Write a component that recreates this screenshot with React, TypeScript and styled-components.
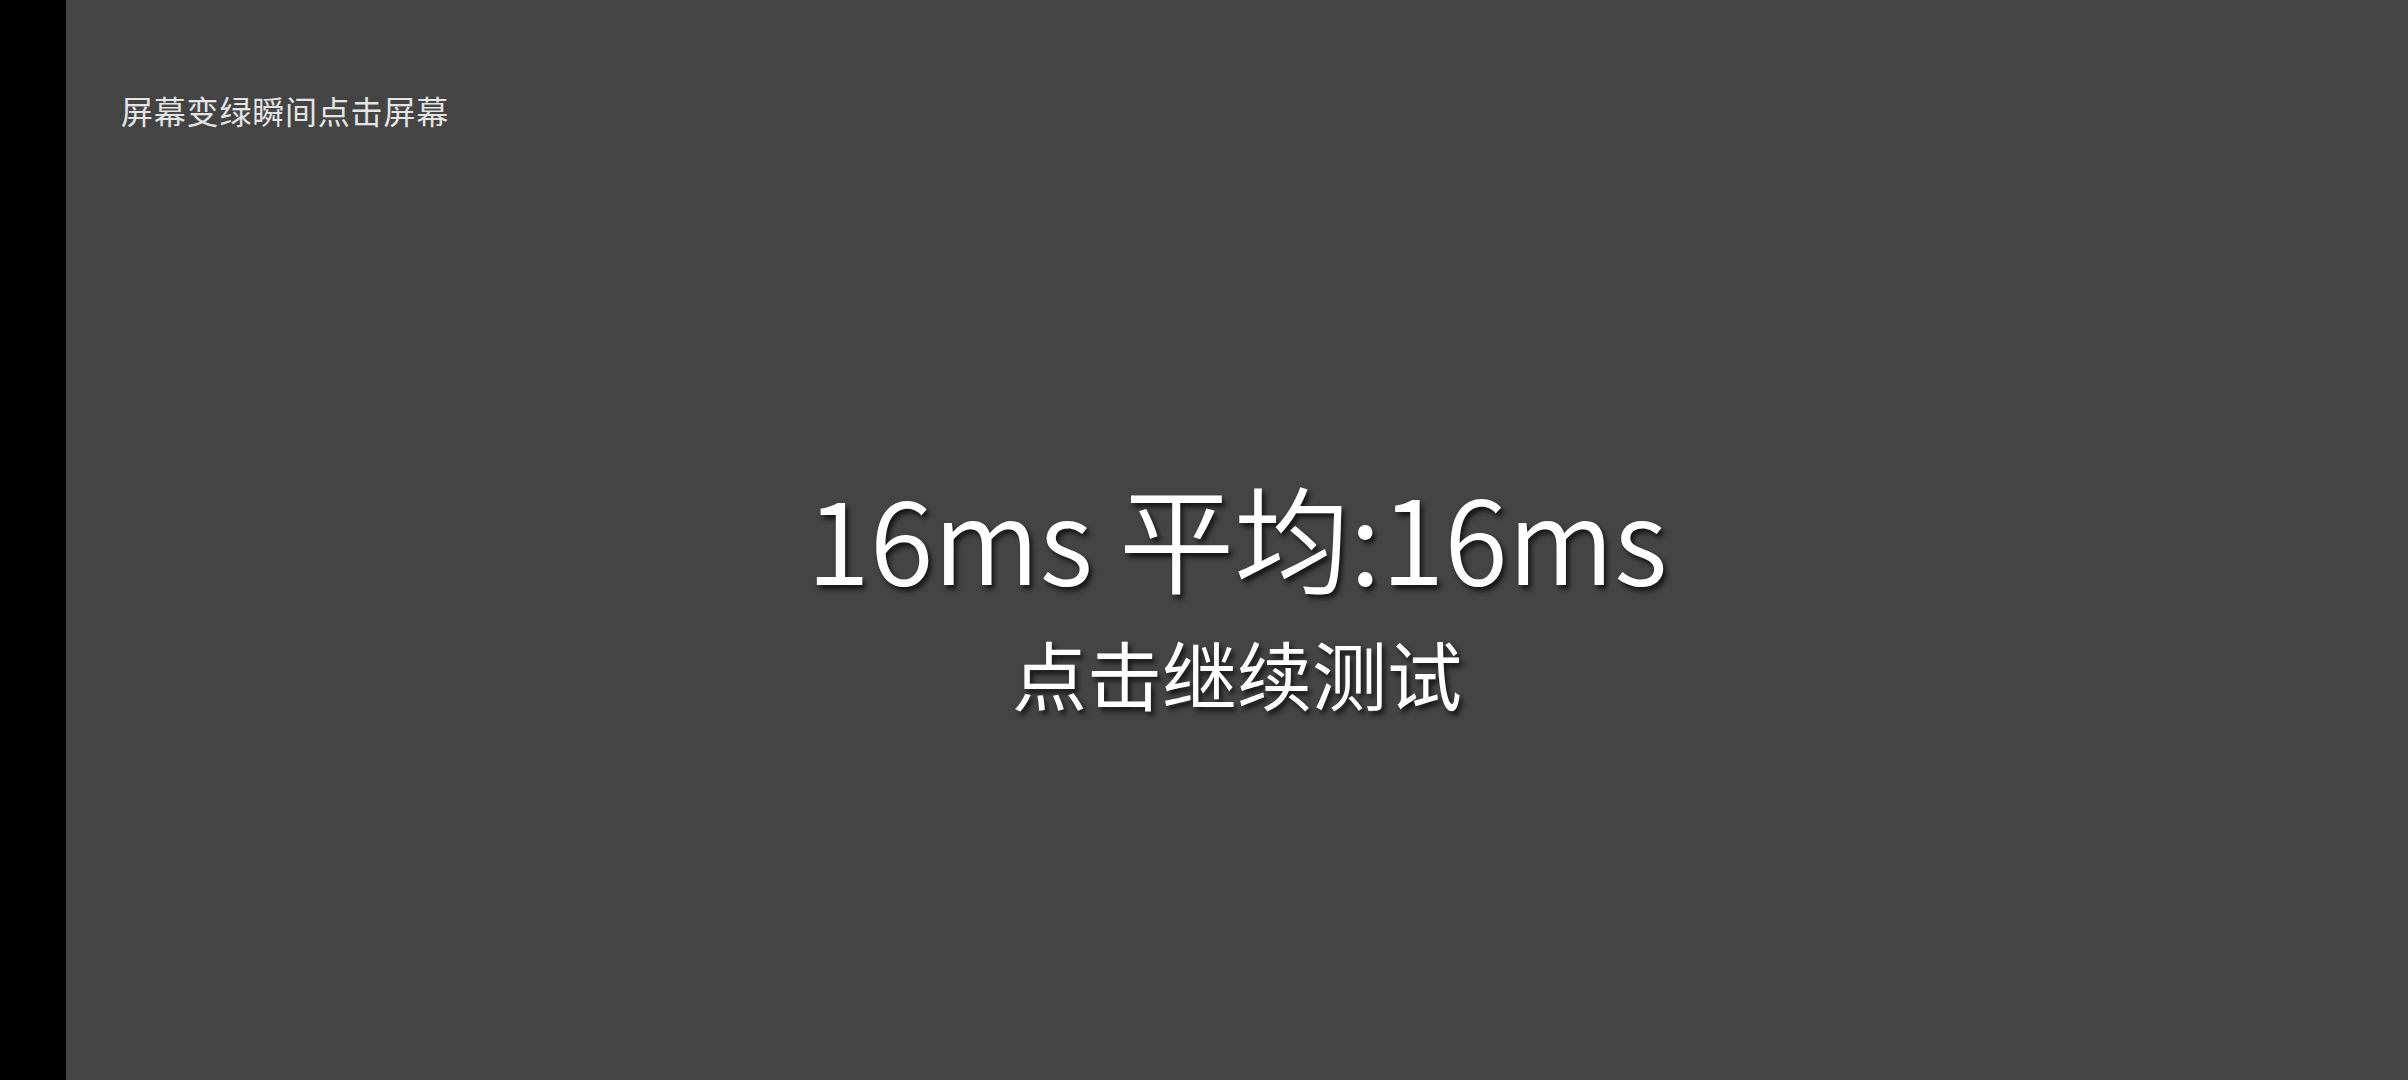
import React from "react";
import styled, { createGlobalStyle } from "styled-components";

const Global = createGlobalStyle`
  html, body { margin: 0; padding: 0; background: #000; }
  body { width: 2408px; height: 1080px; overflow: hidden; }
  #root { height: 100%; }
`;

const Screen = styled.div`
  display: flex;
  width: 2408px;
  height: 1080px;
  font-family: "Noto Sans CJK SC", "Noto Sans", sans-serif;
`;

const Cutout = styled.div`
  width: 66px;
  flex: none;
  background: #000;
`;

const Stage = styled.main`
  flex: 1;
  display: flex;
  flex-direction: column;
  background: #444444;
  padding: 90px 0 0 55px;
  box-sizing: border-box;
`;

const Hint = styled.div`
  font-size: 32px;
  line-height: 40px;
  color: #e4e4e4;
  letter-spacing: 0.8px;
`;

const Result = styled.section`
  display: flex;
  flex-direction: column;
  align-items: center;
  margin: 333px 55px 0 0;
  color: #ffffff;
  text-shadow: 3px 4px 5px rgba(0, 0, 0, 0.7);
`;

const Score = styled.div`
  font-size: 115.5px;
  line-height: 144px;
  font-weight: 350;
  white-space: nowrap;
`;

const Prompt = styled.div`
  margin-top: 23px;
  font-size: 75px;
  line-height: 86px;
  font-weight: 400;
`;

export default function App() {
  return (
    <>
      <Global />
      <Screen>
        <Cutout />
        <Stage>
          <Hint>屏幕变绿瞬间点击屏幕</Hint>
          <Result>
            <Score>16ms 平均:16ms</Score>
            <Prompt>点击继续测试</Prompt>
          </Result>
        </Stage>
      </Screen>
    </>
  );
}
